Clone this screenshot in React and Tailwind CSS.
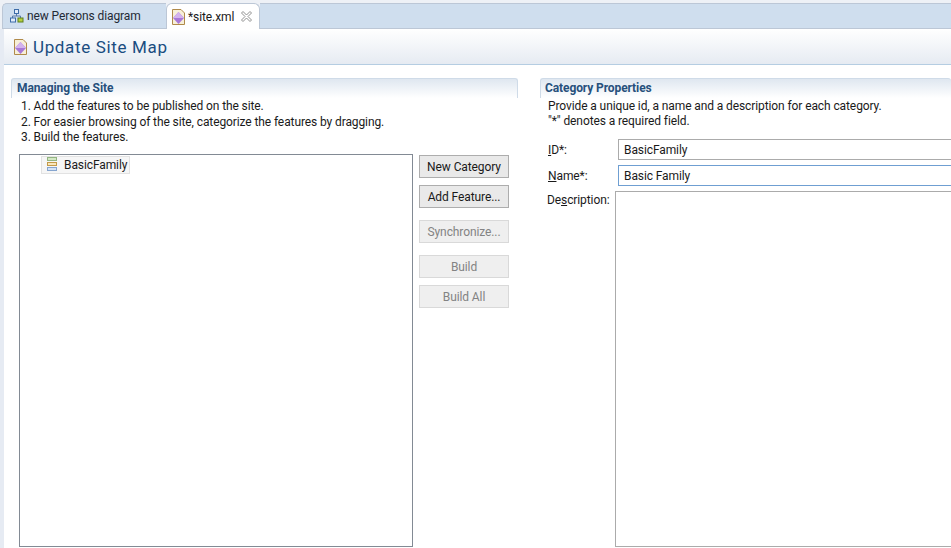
const fontStack = "font-['Roboto',sans-serif]";

function DiagramIcon() {
  return (
    <svg width="14" height="14" viewBox="0 0 14 14" className="shrink-0">
      <rect x="4.5" y="0.5" width="4" height="4" fill="#e3ecf8" stroke="#3d6ca8" />
      <path d="M6.5 5v2M2.5 9V7h8v2" fill="none" stroke="#5a7aa8" />
      <rect x="0.5" y="9" width="5" height="4" fill="#e3ecf8" stroke="#3d6ca8" />
      <rect x="8" y="9" width="5" height="4" fill="#b5cf3f" stroke="#5c7f1e" />
    </svg>
  );
}

function SiteFileIcon() {
  return (
    <svg width="13" height="16" viewBox="0 0 13 16" className="shrink-0">
      <path d="M0.5 0.5H9L12.5 4V15.5H0.5Z" fill="#f7efd9" stroke="#b08a4a" />
      <path d="M6.5 3L12 9L6.5 15L1 9Z" fill="#a878d8" />
      <path d="M6.5 3L12 9H1Z" fill="#d3b3ee" />
    </svg>
  );
}

function CloseIcon() {
  return (
    <svg width="11" height="11" viewBox="0 0 11 11" className="shrink-0">
      <path
        d="M0.5 2L2 0.5L5.5 4L9 0.5L10.5 2L7 5.5L10.5 9L9 10.5L5.5 7L2 10.5L0.5 9L4 5.5Z"
        fill="#fff"
        stroke="#8f8f8f"
      />
    </svg>
  );
}

function CategoryIcon() {
  return (
    <svg width="10" height="15" viewBox="0 0 10 15" className="shrink-0">
      <rect x="0.5" y="0.5" width="9" height="3" fill="#d3e8c4" stroke="#93b582" />
      <rect x="0.5" y="5.5" width="9" height="3" fill="#f7e7bd" stroke="#c49a48" />
      <rect x="0.5" y="10.5" width="9" height="3" fill="#d5e3f5" stroke="#86a5cf" />
    </svg>
  );
}

function SideButton({ label, disabled, className }) {
  return (
    <button
      className={`h-[23px] w-[90px] border pt-[1px] text-center text-[12px] leading-[20px] ${
        disabled
          ? 'border-[#d9d9d9] bg-[#efefef] text-[#838383]'
          : 'border-[#adadad] bg-[#e9e9e9] text-[#1a1a1a]'
      } ${className || ''}`}
    >
      {label}
    </button>
  );
}

function SectionHeader({ title, className }) {
  return (
    <div
      className={`h-[20px] rounded-t-[3px] border-t border-[#cfdbe8] bg-gradient-to-b from-[#dfe7f0] to-white text-[12px] font-bold leading-[18px] text-[#27507c] ${className}`}
    >
      {title}
    </div>
  );
}

export default function App() {
  const steps = [
    '1. Add the features to be published on the site.',
    '2. For easier browsing of the site, categorize the features by dragging.',
    '3. Build the features.',
  ];

  return (
    <div className={`flex h-[548px] w-[951px] flex-col overflow-hidden bg-white text-[12px] tracking-[-0.1px] text-[#1a1a1a] ${fontStack}`}>
      {/* Editor tabs */}
      <div className="flex h-[29px] shrink-0 bg-[#eef1f6] pl-[2px] pt-[3px]">
        <div className="flex w-[164px] items-center gap-[3px] rounded-tl-[5px] border-l border-t border-b border-[#bcc7d6] bg-[#cfdeee] pl-[7px] text-[#1f2a36]">
          <DiagramIcon />
          <span>new Persons diagram</span>
        </div>
        <div className="flex w-[94px] items-center gap-[3px] rounded-t-[6px] border-x border-t border-[#bcc7d6] bg-white pl-[5px]">
          <SiteFileIcon />
          <span className="w-[50px]">*site.xml</span>
          <CloseIcon />
        </div>
        <div className="flex-1 border-b border-t border-[#bcc7d6] bg-[#cfdeee]" />
      </div>

      <div className="flex min-h-0 flex-1">
        <div className="w-[4px] shrink-0 bg-[#e6ebf3]" />
        <div className="flex min-w-0 flex-1 flex-col">
          {/* Form title */}
          <div className="flex h-[36px] shrink-0 items-center gap-[6px] border-b border-[#b5cde2] bg-gradient-to-b from-white to-[#e6ebf2] pl-[10px]">
            <SiteFileIcon />
            <h1 className="pt-[2px] text-[17px] leading-none tracking-[0.65px] text-[#1a4d80]">Update Site Map</h1>
          </div>

          <div className="flex min-h-0 flex-1 pb-[1px] pl-[7px] pt-[13px]">
            {/* Managing the Site */}
            <section className="flex w-[507px] shrink-0 flex-col">
              <SectionHeader title="Managing the Site" className="border-x pl-[5px]" />
              <div className="pl-[10px] pt-[1px] leading-[15.5px]">
                {steps.map((step) => (
                  <div key={step}>{step}</div>
                ))}
              </div>
              <div className="mt-[8px] flex min-h-0 flex-1 pl-[8px]">
                <div className="w-[394px] border border-[#828a94] pl-[21px] pt-[1px]">
                  <div className="flex h-[18px] w-[89px] items-center gap-[7px] border border-[#e2e2e2] bg-[#f6f6f6] pl-[5px]">
                    <CategoryIcon />
                    <span>BasicFamily</span>
                  </div>
                </div>
                <div className="ml-[6px] flex flex-col pt-[1px]">
                  <SideButton label="New Category" />
                  <SideButton label="Add Feature..." className="mt-[7px]" />
                  <SideButton label="Synchronize..." disabled className="mt-[12px]" />
                  <SideButton label="Build" disabled className="mt-[12px]" />
                  <SideButton label="Build All" disabled className="mt-[7px]" />
                </div>
              </div>
            </section>

            {/* Category Properties */}
            <section className="ml-[22px] flex min-w-0 flex-1 flex-col">
              <SectionHeader title="Category Properties" className="border-l pl-[4px]" />
              <div className="pl-[8px] pt-[1px] leading-[15px]">
                <div>Provide a unique id, a name and a description for each category.</div>
                <div>"*" denotes a required field.</div>
              </div>
              <div className="mt-[10px] flex h-[21px] items-center pl-[8px]">
                <label className="w-[70px]"><u>I</u>D*:</label>
                <div className="flex h-[21px] flex-1 items-center border-y border-l border-[#ababab] pl-[5px]">BasicFamily</div>
              </div>
              <div className="mt-[5px] flex h-[21px] items-center pl-[8px]">
                <label className="w-[70px]"><u>N</u>ame*:</label>
                <div className="flex h-[21px] flex-1 items-center border-y border-l border-[#6f9fd2] pl-[5px]">Basic Family</div>
              </div>
              <div className="mt-[5px] flex min-h-0 flex-1 pl-[7px]">
                <label className="w-[68px]">De<u>s</u>cription:</label>
                <div className="flex-1 border-y border-l border-[#ababab]" />
              </div>
            </section>
          </div>
        </div>
      </div>
    </div>
  );
}
